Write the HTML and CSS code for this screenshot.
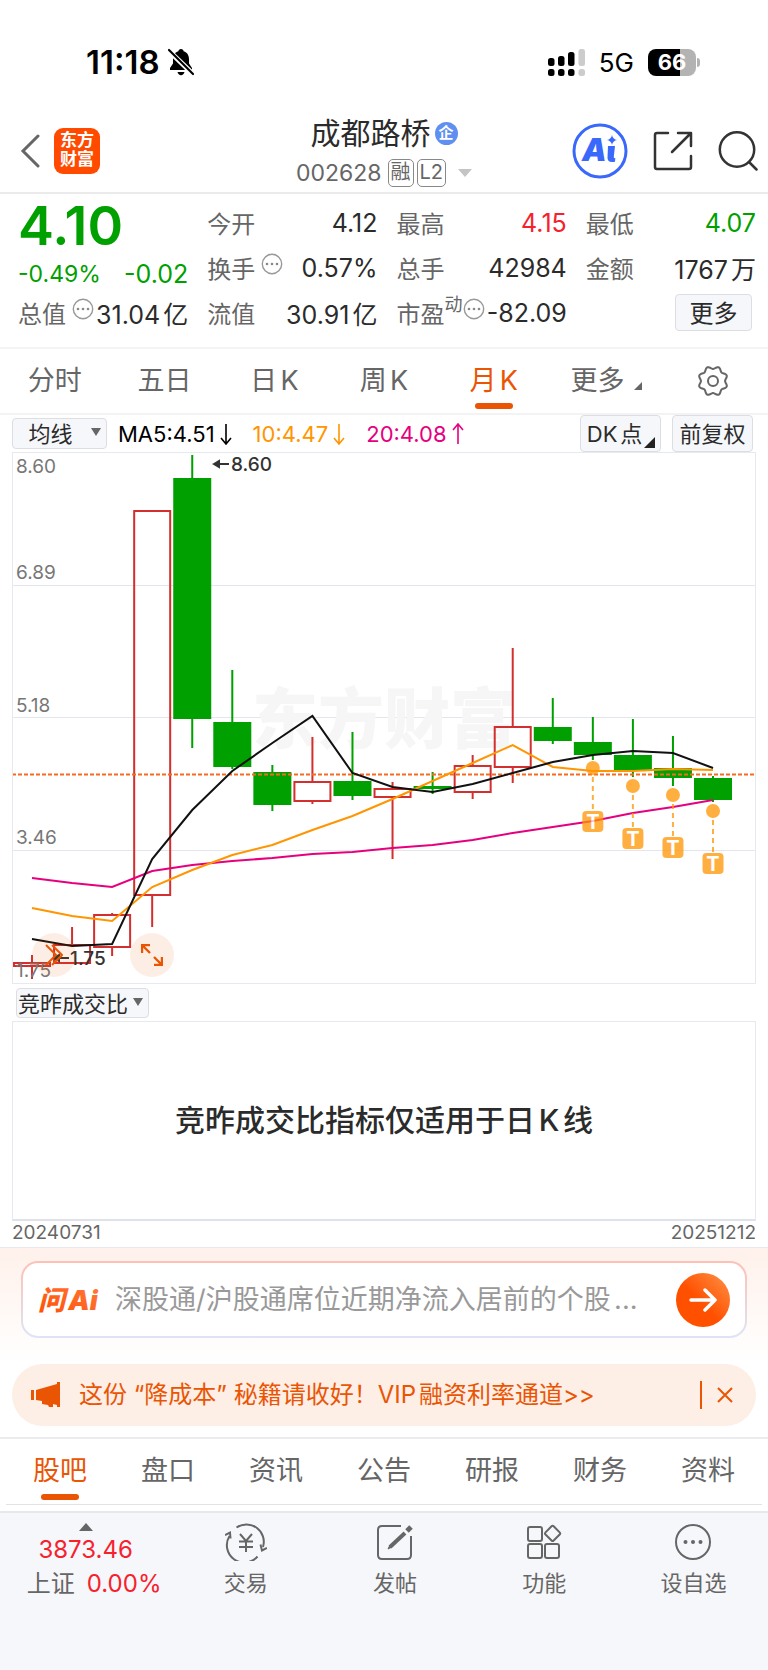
FILE: index.html
```html
<!DOCTYPE html>
<html lang="zh-CN">
<head>
    <meta charset="UTF-8">
    <meta name="viewport" content="width=device-width, initial-scale=1.0">
    <title>成都路桥 002628</title>
    <link rel="stylesheet" href="styles.css">
</head>
<body>
    <div class="status-bar">
        <div class="status-left">
            <span class="clock">11:18</span>
            <svg width="26" height="28" viewBox="0 0 26 28">
                <path d="M13 1c-1.500 0-2.400 1-2.600 2.200C6.600 4.400 5 7.600 5 11v4.500L2 20v2h22v-2l-3-4.500V11c0-3.400-1.600-6.600-5.400-7.800C15.400 2 14.500 1 13 1zM9.500 24h7c-.4 2-1.800 3.200-3.500 3.200S9.900 26 9.500 24z"/>
                <path d="M-1 1l27 26" stroke="#fff" stroke-width="5"/>
                <path d="M1 2l24 24" stroke="#000" stroke-width="2.200" stroke-linecap="round"/>
            </svg>
        </div>
        <div class="status-right">
            <svg width="37" height="27" viewBox="0 0 37 27">
                <rect x="0" y="9" width="6.500" height="8" rx="2.500"/>
                <rect x="10" y="7" width="6.500" height="10" rx="2.500"/>
                <rect x="20" y="3" width="6.500" height="14" rx="2.500"/>
                <rect x="30.500" y="0" width="6.500" height="17" rx="2.500" fill="#ccc"/>
                <rect x="0" y="20" width="6.500" height="7" rx="2.500"/>
                <rect x="10" y="20" width="6.500" height="7" rx="2.500"/>
                <rect x="20" y="20" width="6.500" height="7" rx="2.500"/>
                <rect x="30.500" y="20" width="6.500" height="7" rx="2.500" fill="#ccc"/>
            </svg>
            <span class="network">5G</span>
            <span class="battery">66</span>
        </div>
    </div>

    <header class="header">
        <div class="header-left">
            <button class="icon-btn" aria-label="返回">
                <svg width="20" height="34" viewBox="0 0 20 34"><path d="M18 2L3 17l15 15" fill="none" stroke="#666" stroke-width="3" stroke-linecap="round"/></svg>
            </button>
            <a class="logo" href="#">东方<br>财富</a>
        </div>
        <div class="stock">
            <h1 class="stock-name">成都路桥<span class="ent">企</span></h1>
            <div class="stock-code">002628
                <span class="tags"><span class="tag">融</span><span class="tag">L2</span></span>
                <svg width="14" height="8" viewBox="0 0 14 8"><path d="M0 0h14L7 8z" fill="#c4c4c4"/></svg>
            </div>
        </div>
        <div class="header-right">
            <button class="icon-btn" aria-label="Ai">
                <svg width="56" height="56" viewBox="0 0 56 56">
                    <circle cx="28" cy="28" r="26" fill="none" stroke="#3a68fb" stroke-width="3"/>
                    <text class="ai-text" x="10" y="38">A</text>
                    <path d="M36 23h7l-1.200 10.500q-.2 2 1.500 1.600l-.3 3.600q-8 1.500-7.500-4.500z" fill="#3a68fb"/>
                    <path d="M40 12q.8 4.200 5 5-4.200.8-5 5-.8-4.200-5-5 4.200-.8 5-5z" fill="#3a68fb"/>
                </svg>
            </button>
            <button class="icon-btn" aria-label="分享">
                <svg width="40" height="40" viewBox="0 0 40 40" fill="none" stroke="#333" stroke-width="2.500" stroke-linecap="round" stroke-linejoin="round">
                    <path d="M15 2H4Q2 2 2 4v32q0 2 2 2h32q2 0 2-2V25"/><path d="M25 2h13v13M38 2L19 21"/>
                </svg>
            </button>
            <button class="icon-btn" aria-label="搜索">
                <svg width="40" height="40" viewBox="0 0 40 40" fill="none" stroke="#333" stroke-width="2.500" stroke-linecap="round">
                    <circle cx="19" cy="18.500" r="17.200"/><path d="M31 31l7.500 7.500"/>
                </svg>
            </button>
        </div>
    </header>

    <section class="quote">
        <div class="cell price">4.10</div>
        <div class="cell"><span>今开</span><b>4.12</b></div>
        <div class="cell"><span>最高</span><b class="red">4.15</b></div>
        <div class="cell"><span>最低</span><b class="green">4.07</b></div>
        <div class="cell change"><b class="green percent">-0.49%</b><b class="green">-0.02</b></div>
        <div class="cell"><span>换手<svg class="dots" viewBox="0 0 22 22"><use href="#dots"/></svg></span><b>0.57%</b></div>
        <div class="cell"><span>总手</span><b>42984</b></div>
        <div class="cell"><span>金额</span><b>1767万</b></div>
        <div class="cell"><span>总值<svg class="dots" viewBox="0 0 22 22"><use href="#dots"/></svg></span><b>31.04亿</b></div>
        <div class="cell"><span>流值</span><b>30.91亿</b></div>
        <div class="cell pe"><span>市盈<sup>动</sup><svg class="dots" viewBox="0 0 22 22"><use href="#dots"/></svg></span><b>-82.09</b></div>
        <div class="cell more"><button class="box-btn">更多</button></div>
    </section>

    <nav class="period-tabs">
        <a href="#">分时</a>
        <a href="#">五日</a>
        <a href="#">日K</a>
        <a href="#">周K</a>
        <a href="#" class="active">月K</a>
        <a href="#" class="has-more">更多</a>
        <button class="icon-btn" aria-label="设置">
            <svg width="32" height="32" viewBox="0 0 32 32" fill="none" stroke="#666" stroke-width="2">
                <path id="gear" stroke-linejoin="round"/>
                <circle cx="16" cy="16" r="5"/>
            </svg>
        </button>
    </nav>

    <div class="ma-bar">
        <button class="box-btn ma-select">均线<i class="caret"></i></button>
        <span class="ma5">MA5:4.51<svg width="12" height="22" viewBox="0 0 12 22"><use href="#down"/></svg></span>
        <span class="ma10">10:4.47<svg width="12" height="22" viewBox="0 0 12 22"><use href="#down"/></svg></span>
        <span class="ma20">20:4.08<svg width="12" height="22" viewBox="0 0 12 22"><use href="#up"/></svg></span>
        <button class="box-btn dk">DK点</button>
        <button class="box-btn">前复权</button>
    </div>

    <div class="chart">
        <svg id="kline" viewBox="0 0 744 532">
            <g class="grid">
                <path d="M0 133.500H744M0 265.500H744M0 398.500H744"/>
            </g>
            <text class="watermark" x="240" y="291">东方财富</text>
            <g id="candles"></g>
            <path class="last-price" d="M0 322.500H744"/>
            <g id="lines"></g>
            <g id="marks"></g>
            <g class="axis">
                <text x="4" y="21">8.60</text>
                <text x="4" y="127">6.89</text>
                <text x="4" y="260">5.18</text>
                <text x="4" y="392">3.46</text>
                <text x="4" y="525">1.75</text>
            </g>
            <g class="peak">
                <path d="M202 12h15M202 12l5-3v6zM42 506h15M42 506l5-3v6z"/>
                <text x="219" y="19">8.60</text>
                <text x="58" y="513">1.75</text>
            </g>
        </svg>
        <button class="round-btn next" aria-label="后移">
            <svg width="18" height="22" viewBox="0 0 18 22" fill="none" stroke="#ea5504" stroke-width="2"><path d="M1 1l10 10L1 21M7 1l10 10L7 21"/></svg>
        </button>
        <button class="round-btn full" aria-label="全屏">
            <svg width="22" height="22" viewBox="0 0 22 22" fill="none" stroke="#ea5504" stroke-width="2.400"><path d="M1 9V1h8M1 1l8 8M21 13v8h-8M21 21l-8-8"/></svg>
        </button>
    </div>

    <div class="sub-bar"><button class="box-btn">竞昨成交比<i class="caret"></i></button></div>
    <div class="sub-chart">竞昨成交比指标仅适用于日K线</div>
    <div class="dates"><span>20240731</span><span>20251212</span></div>

    <section class="ask">
        <form class="ask-box">
            <svg width="64" height="44" viewBox="0 0 64 44">
                <defs>
                    <linearGradient id="askFill" x1="0" y1="1" x2="1" y2="0"><stop offset="0" stop-color="#ff4d00"/><stop offset="1" stop-color="#ff7a3c"/></linearGradient>
                </defs>
                <text class="ask-logo" x="0" y="32" fill="url(#askFill)">问Ai</text>
            </svg>
            <input type="text" aria-label="问Ai" placeholder="深股通/沪股通席位近期净流入居前的个股...">
            <button class="send" type="button" aria-label="发送">
                <svg width="28" height="24" viewBox="0 0 28 24" fill="none" stroke="#fff" stroke-width="3.500" stroke-linecap="round" stroke-linejoin="round"><path d="M2 12h24M16 2l10 10-10 10"/></svg>
            </button>
        </form>
    </section>

    <div class="notice">
        <svg width="30" height="26" viewBox="0 0 30 26" fill="#ea5504"><path d="M0 8h3v10H0zM5 8l21-6V0h3v25h-3v-2l-4-1v3h-4l-1-2-6-1v-3l-6-1z"/></svg>
        <a href="#">这份 “降成本” 秘籍请收好！VIP融资利率通道&gt;&gt;</a>
        <button class="icon-btn close" aria-label="关闭">
            <svg width="16" height="16" viewBox="0 0 16 16"><path d="M1 1l14 14M15 1L1 15" stroke="#ea5504" stroke-width="2"/></svg>
        </button>
    </div>

    <div class="info-bar">
        <nav class="info-tabs">
            <a href="#" class="active">股吧</a>
            <a href="#">盘口</a>
            <a href="#">资讯</a>
            <a href="#">公告</a>
            <a href="#">研报</a>
            <a href="#">财务</a>
            <a href="#">资料</a>
        </nav>
    </div>

    <footer class="footer">
        <a href="#" class="index">
            <svg width="14" height="8" viewBox="0 0 14 8"><path d="M0 8h14L7 0z" fill="#666"/></svg>
            <span class="index-value">3873.46</span>
            <span class="index-name">上证<em>0.00%</em></span>
        </a>
        <a href="#">
            <svg width="42" height="38" viewBox="0 0 42 38" fill="none" stroke="#666" stroke-width="2">
                <path d="M11.500 4.500A17.400 17.400 0 0 1 38 24M32.500 33.500A17.400 17.400 0 0 1 4.500 13"/>
                <path d="M0 12l5-2.500.500 6M42 25l-5 2.500-1.500-6M15 11l6 7 6-7M21 18v11M14 18.500h14M14 24h14"/>
            </svg>
            交易
        </a>
        <a href="#">
            <svg width="38" height="38" viewBox="0 0 38 38" fill="none" stroke="#666" stroke-width="2">
                <path d="M25 3H6Q2 3 2 7v25q0 4 4 4h25q4 0 4-4V13"/>
                <path d="M14 24L29 10" stroke-width="4"/><path d="M31 8l4-4" stroke-width="5"/><path d="M12 26l2-4 2 2z" fill="#666" stroke-width="1"/>
            </svg>
            发帖
        </a>
        <a href="#">
            <svg width="38" height="38" viewBox="0 0 38 38" fill="none" stroke="#666" stroke-width="2">
                <rect x="3" y="4" width="14" height="14" rx="2"/><rect x="3" y="21" width="14" height="14" rx="2"/><rect x="20" y="21" width="14" height="14" rx="2"/>
                <rect x="21.500" y="4.500" width="11.500" height="11.500" rx="1.500" transform="rotate(45 27.250 10.750)"/>
            </svg>
            功能
        </a>
        <a href="#">
            <svg width="38" height="38" viewBox="0 0 38 38">
                <circle cx="19" cy="19" r="17" fill="none" stroke="#666" stroke-width="2"/>
                <g fill="#666"><circle cx="11.500" cy="19" r="2"/><circle cx="19" cy="19" r="2"/><circle cx="26.500" cy="19" r="2"/></g>
            </svg>
            设自选
        </a>
    </footer>

    <!-- shared icons -->
    <svg class="sprite" aria-hidden="true">
        <symbol id="dots" viewBox="0 0 22 22">
            <circle cx="11" cy="11" r="9.700" fill="none" stroke="#999" stroke-width="1.400"/>
            <circle cx="6" cy="11" r="1.300" fill="#888"/><circle cx="11" cy="11" r="1.300" fill="#888"/><circle cx="16" cy="11" r="1.300" fill="#888"/>
        </symbol>
        <symbol id="down" viewBox="0 0 12 22"><path d="M6 1v20M1 15l5 6 5-6" fill="none" stroke="currentColor" stroke-width="1.600"/></symbol>
        <symbol id="up" viewBox="0 0 12 22"><path d="M6 21V1M1 7l5-6 5 6" fill="none" stroke="currentColor" stroke-width="1.600"/></symbol>
    </svg>

    <script src="chart.js"></script>
</body>
</html>
```

FILE: styles.css
```css
* {
    box-sizing: border-box;
}

body {
    margin: 0;
    background: #fff;
    color: #2b2b2b;
    font-family: Inter, "Noto Sans CJK SC", sans-serif;
    font-size: 24px;
    text-autospace: normal;
}

a {
    color: inherit;
    text-decoration: none;
}

button {
    font: inherit;
    color: inherit;
    cursor: pointer;
}

svg {
    display: block;
    flex: none;
}

.sprite {
    position: absolute;
    width: 0;
    height: 0;
}

.icon-btn {
    display: flex;
    align-items: center;
    justify-content: center;
    padding: 0;
    border: 0;
    background: none;
}

.red {
    color: #f5222d;
}

.green {
    color: #00a000;
}

/* status bar */
.status-bar {
    display: flex;
    justify-content: space-between;
    align-items: center;
    height: 108px;
    padding: 16px 72px 0 86px;
    color: #000;
}

.status-left,
.status-right {
    display: flex;
    align-items: center;
    gap: 8px;
}

.status-right {
    gap: 14px;
}

.clock {
    font-size: 33px;
    font-weight: 600;
}

.network {
    font-size: 26px;
}

.battery {
    position: relative;
    width: 48px;
    height: 27px;
    border-radius: 8px;
    background: linear-gradient(90deg, #000 66%, #b3b3b3 66%);
    color: #fff;
    font-size: 22px;
    font-weight: 700;
    line-height: 27px;
    text-align: center;
}

.battery::after {
    content: "";
    position: absolute;
    top: 9px;
    right: -4px;
    width: 3px;
    height: 9px;
    border-radius: 0 3px 3px 0;
    background: #b3b3b3;
}

/* header */
.header {
    display: grid;
    grid-template-columns: 1fr auto 1fr;
    align-items: center;
    height: 86px;
    padding: 0 10px;
    border-bottom: 2px solid #ebebeb;
}

.header-left,
.header-right {
    display: flex;
    align-items: center;
    gap: 14px;
}

.header-left {
    padding-left: 10px;
}

.header-right {
    justify-content: flex-end;
    gap: 25px;
}

.logo {
    width: 46px;
    height: 46px;
    padding-top: 3px;
    border-radius: 9px;
    background: #ff4a00;
    color: #fff;
    font-size: 17px;
    font-weight: 700;
    line-height: 19px;
    text-align: center;
}

.stock {
    padding-top: 5px;
}

.stock-name {
    display: flex;
    align-items: center;
    justify-content: center;
    gap: 4px;
    margin: 0;
    font-size: 30px;
    font-weight: 400;
    line-height: 40px;
}

.ent {
    width: 23px;
    height: 23px;
    border-radius: 50%;
    background: #5f8ff0;
    color: #fff;
    font-size: 15px;
    font-weight: 700;
    line-height: 22px;
    text-align: center;
}

.stock-code {
    display: flex;
    align-items: center;
    gap: 6px;
    color: #666;
    font-size: 23px;
    line-height: 40px;
}

.stock-code svg {
    margin-left: 6px;
}

.tags {
    display: flex;
    gap: 3px;
}

.tag {
    height: 28px;
    padding: 0 2px;
    border: 1px solid #888;
    border-radius: 5px;
    font-size: 20px;
    line-height: 25px;
}

.ai-text {
    fill: #3a68fb;
    font-size: 31px;
    font-weight: 900;
    font-style: italic;
}

/* quote */
.quote {
    display: grid;
    grid-template-columns: repeat(4, 1fr);
    grid-auto-rows: 45px;
    column-gap: 19px;
    padding: 6px 12px 12px 18px;
    border-bottom: 2px solid #f3f3f3;
}

.cell {
    display: flex;
    align-items: center;
    justify-content: space-between;
    color: #666;
    white-space: nowrap;
}

.cell span {
    display: flex;
    align-items: center;
    gap: 6px;
}

.cell b {
    font-size: 25px;
    font-weight: 400;
}

.cell b:not([class]) {
    color: #2b2b2b;
}

.cell.price {
    padding-top: 6px;
    color: #00a000;
    font-size: 54px;
    font-weight: 600;
}

.cell.change {
    padding-top: 12px;
}

.cell .percent {
    font-size: 23px;
}

.cell.pe span {
    gap: 0;
}

.cell.pe sup {
    margin-bottom: 16px;
    font-size: 18px;
    line-height: 20px;
}

.cell.more {
    justify-content: flex-end;
    padding-right: 4px;
}

.more .box-btn {
    width: 77px;
    height: 37px;
    color: #2b2b2b;
    font-size: 24px;
}

.dots {
    width: 22px;
    height: 22px;
    margin-bottom: 8px;
}

.box-btn {
    display: flex;
    align-items: center;
    justify-content: center;
    padding: 0 0 3px;
    border: 1px solid #dcdee3;
    border-radius: 4px;
    background: #f6f7fa;
    font-size: 22px;
    white-space: nowrap;
}

.caret {
    border: 5px solid transparent;
    border-top: 8px solid #666;
    border-bottom: 0;
}

/* period tabs */
.period-tabs,
.info-tabs {
    display: grid;
    grid-template-columns: repeat(7, 1fr);
    height: 66px;
    border-bottom: 2px solid #f3f3f3;
    color: #666;
    font-size: 27px;
    line-height: 64px;
    text-align: center;
}

.active {
    position: relative;
    color: #ea5504;
}

.active::after {
    content: "";
    position: absolute;
    bottom: 4px;
    left: 50%;
    width: 38px;
    height: 6px;
    margin-left: -19px;
    border-radius: 3px;
    background: #ea5504;
}

.has-more {
    padding-left: 6px;
}

.has-more::after {
    content: "";
    display: inline-block;
    margin-left: 10px;
    border-left: 8px solid transparent;
    border-bottom: 8px solid #666;
}

/* moving averages */
.ma-bar {
    display: flex;
    align-items: center;
    gap: 11px;
    height: 37px;
    padding: 0 15px 0 12px;
    font-size: 22px;
}

.ma-bar span {
    display: flex;
    align-items: center;
    gap: 5px;
}

.ma-bar .box-btn {
    width: 81px;
    height: 37px;
}

.ma-bar .ma-select {
    width: 95px;
    height: 31px;
    gap: 18px;
    padding-left: 10px;
}

.ma5 {
    color: #000;
}

.ma-bar .ma10 {
    margin-left: 10px;
    color: #ff9500;
}

.ma-bar .ma20 {
    margin-left: 10px;
    color: #e6007e;
}

.ma-bar .dk {
    position: relative;
    margin-left: auto;
    padding-right: 12px;
}

.dk::after {
    content: "";
    position: absolute;
    right: 5px;
    bottom: 3px;
    border-left: 11px solid transparent;
    border-bottom: 11px solid #222;
}

/* k-line chart */
.chart {
    position: relative;
    margin: 0 12px;
    outline: 1px solid #e6e9ef;
    outline-offset: -1px;
}

.chart > svg {
    width: 100%;
    height: auto;
}

.grid path {
    stroke: #e3e6ee;
}

.watermark {
    fill: #f6f6f6;
    font-size: 66px;
    font-weight: 900;
}

.axis text {
    fill: #777;
    font-size: 19px;
}

.peak text {
    fill: #333;
    font-size: 19px;
    font-weight: 500;
}

.peak path {
    fill: #333;
    stroke: #333;
    stroke-width: 2;
}

.last-price {
    stroke: #f56a1e;
    stroke-width: 2;
    stroke-dasharray: 4 2;
}

.up {
    fill: none;
    stroke: #d32f2f;
    stroke-width: 2;
}

.down {
    fill: #00a000;
    stroke: #00a000;
    stroke-width: 2;
}

.line {
    fill: none;
    stroke-width: 2;
}

.mark {
    fill: #ff9500;
    opacity: .75;
}

.mark path {
    stroke: #ff9500;
    stroke-width: 2;
    stroke-dasharray: 5 4;
}

.mark text {
    fill: #fff;
    font-size: 20px;
    font-weight: 700;
    text-anchor: middle;
}

.round-btn {
    position: absolute;
    bottom: 7px;
    display: flex;
    align-items: center;
    justify-content: center;
    width: 44px;
    height: 44px;
    padding: 0;
    border: 0;
    border-radius: 50%;
    background: rgba(234, 85, 4, .1);
}

.next {
    left: 20px;
}

.full {
    left: 118px;
}

/* indicator */
.sub-bar {
    padding: 4px 16px 3px;
}

.sub-bar .box-btn {
    gap: 5px;
    width: 133px;
    height: 30px;
    padding-right: 4px;
}

.sub-chart {
    display: flex;
    align-items: center;
    justify-content: center;
    height: 200px;
    margin: 0 12px;
    padding-bottom: 5px;
    border: 1px solid #e6e9ef;
    border-bottom: 2px solid #dfe2ea;
    font-size: 30px;
    font-weight: 500;
}

.dates {
    display: flex;
    justify-content: space-between;
    padding: 0 12px 2px;
    border-bottom: 1px solid #e6e9ef;
    color: #666;
    font-size: 19px;
    line-height: 24px;
}

/* ask */
.ask {
    padding: 13px 21px 26px;
    background: linear-gradient(#fff1eb, #fff);
}

.ask-box {
    display: flex;
    align-items: center;
    gap: 12px;
    height: 77px;
    padding: 0 15px;
    border: 2px solid transparent;
    border-radius: 17px;
    background: linear-gradient(#fff, #fff) padding-box, linear-gradient(#ffc0b4, #dce5f6) border-box;
}

.ask-logo {
    font-size: 27px;
    font-weight: 900;
    font-style: italic;
}

.ask-box input {
    flex: 1;
    min-width: 0;
    padding: 0 0 0 1px;
    border: 0;
    outline: 0;
    background: none;
    font: inherit;
    font-size: 27px;
}

.ask-box input::placeholder {
    color: #999;
}

.send {
    display: flex;
    align-items: center;
    justify-content: center;
    width: 54px;
    height: 54px;
    padding: 0;
    border: 0;
    border-radius: 50%;
    background: linear-gradient(45deg, #ff5000 45%, #ff9448);
}

/* notice */
.notice {
    display: flex;
    align-items: center;
    gap: 18px;
    height: 62px;
    margin: 0 12px 11px;
    padding: 0 23px 0 19px;
    border-radius: 31px;
    background: #fdeee6;
    color: #ea5504;
    white-space: nowrap;
}

.notice a {
    padding-bottom: 5px;
}

.close {
    margin-left: auto;
    height: 28px;
    padding-left: 15px;
    border-left: 2px solid #ea5504;
}

.info-bar {
    padding: 0 6px 6px;
    border-top: 2px solid #ececef;
}

.info-tabs {
    border-bottom: 1px solid #e3e3e3;
}

/* footer */
.footer {
    display: grid;
    grid-template-columns: 171fr 149fr 149fr 149fr 149fr;
    min-height: 159px;
    padding-top: 10px;
    border-top: 2px solid #e6e8ec;
    background: #f6f7fa;
    color: #666;
    font-size: 22px;
}

.footer a {
    display: flex;
    flex-direction: column;
    align-items: center;
    gap: 5px;
    line-height: 34px;
}

.footer .index {
    gap: 0;
    font-size: 24px;
}

.index-value,
.index em {
    color: #f5222d;
    font-style: normal;
}

.index-value {
    margin-top: 2px;
}

.index-name {
    display: flex;
    gap: 12px;
    padding-left: 17px;
}
```

FILE: chart.js
```js
const step = 40.06;
const xAt = i => 20 + i * step;

// [type, high, body top, body bottom, low]
const candles = [
    ["up", 503, 511, 514, 527],
    ["up", 475, 493, 511, 511],
    ["up", 461, 463, 495, 504],
    ["up", 59, 59, 443, 475],
    ["down", 3, 27, 266, 296],
    ["down", 218, 271, 314, 317],
    ["down", 313, 321, 352, 359],
    ["up", 285, 330, 349, 352],
    ["down", 280, 330, 343, 348],
    ["up", 330, 337, 345, 407],
    ["down", 320, 335, 336, 342],
    ["up", 303, 314, 340, 347],
    ["up", 196, 275, 315, 331],
    ["down", 246, 276, 288, 292],
    ["down", 265, 291, 302, 308],
    ["down", 267, 304, 317, 325],
    ["down", 284, 317, 325, 334],
    ["down", 324, 327, 347, 350]
];

const averages = {
    "#e6007e": [426, 431, 435, 419, 413, 409, 406, 402, 400, 396, 393, 388, 381, 375, 369, 361, 355, 348],
    "#ff9500": [456, 464, 469, 435, 418, 403, 393, 378, 364, 347, 329, 311, 293, 315, 319, 319, 317, 318],
    "#111": [487, 494, 492, 407, 358, 319, 291, 264, 321, 335, 340, 332, 321, 310, 303, 299, 301, 316]
};

// [candle index, dot y, box y]
const marks = [[14, 316, 359], [15, 334, 376], [16, 343, 385], [17, 359, 401]];

let html = "";
candles.forEach(([type, high, top, bottom, low], i) => {
    const x = xAt(i);
    html += `<path class="${type}" d="M${x} ${high}V${top}M${x} ${bottom}V${low}"/>
        <rect class="${type}" x="${x - 18}" y="${top}" width="36" height="${bottom - top}"/>`;
});
document.getElementById("candles").innerHTML = html;

html = "";
for (const color in averages) {
    const points = averages[color].map((y, i) => xAt(i) + "," + y).join(" ");
    html += `<polyline class="line" stroke="${color}" points="${points}"/>`;
}
document.getElementById("lines").innerHTML = html;

html = "";
marks.forEach(([i, dot, box]) => {
    const x = xAt(i);
    html += `<g class="mark">
        <circle cx="${x}" cy="${dot}" r="7"/>
        <path d="M${x} ${dot}V${box}"/>
        <rect x="${x - 10.5}" y="${box}" width="21" height="21" rx="4"/>
        <text x="${x}" y="${box + 18}">T</text>
    </g>`;
});
document.getElementById("marks").innerHTML = html;

// gear outline with eight soft teeth
let gear = "";
for (let a = 0; a < 360; a += 5) {
    const r = 13.4 + 1.4 * Math.cos(a * 8 * Math.PI / 180);
    const rad = (a + 22.5) * Math.PI / 180;
    gear += (a ? "L" : "M") + (16 + r * Math.cos(rad)).toFixed(1) + " " + (16 + r * Math.sin(rad)).toFixed(1);
}
document.getElementById("gear").setAttribute("d", gear + "Z");
```
